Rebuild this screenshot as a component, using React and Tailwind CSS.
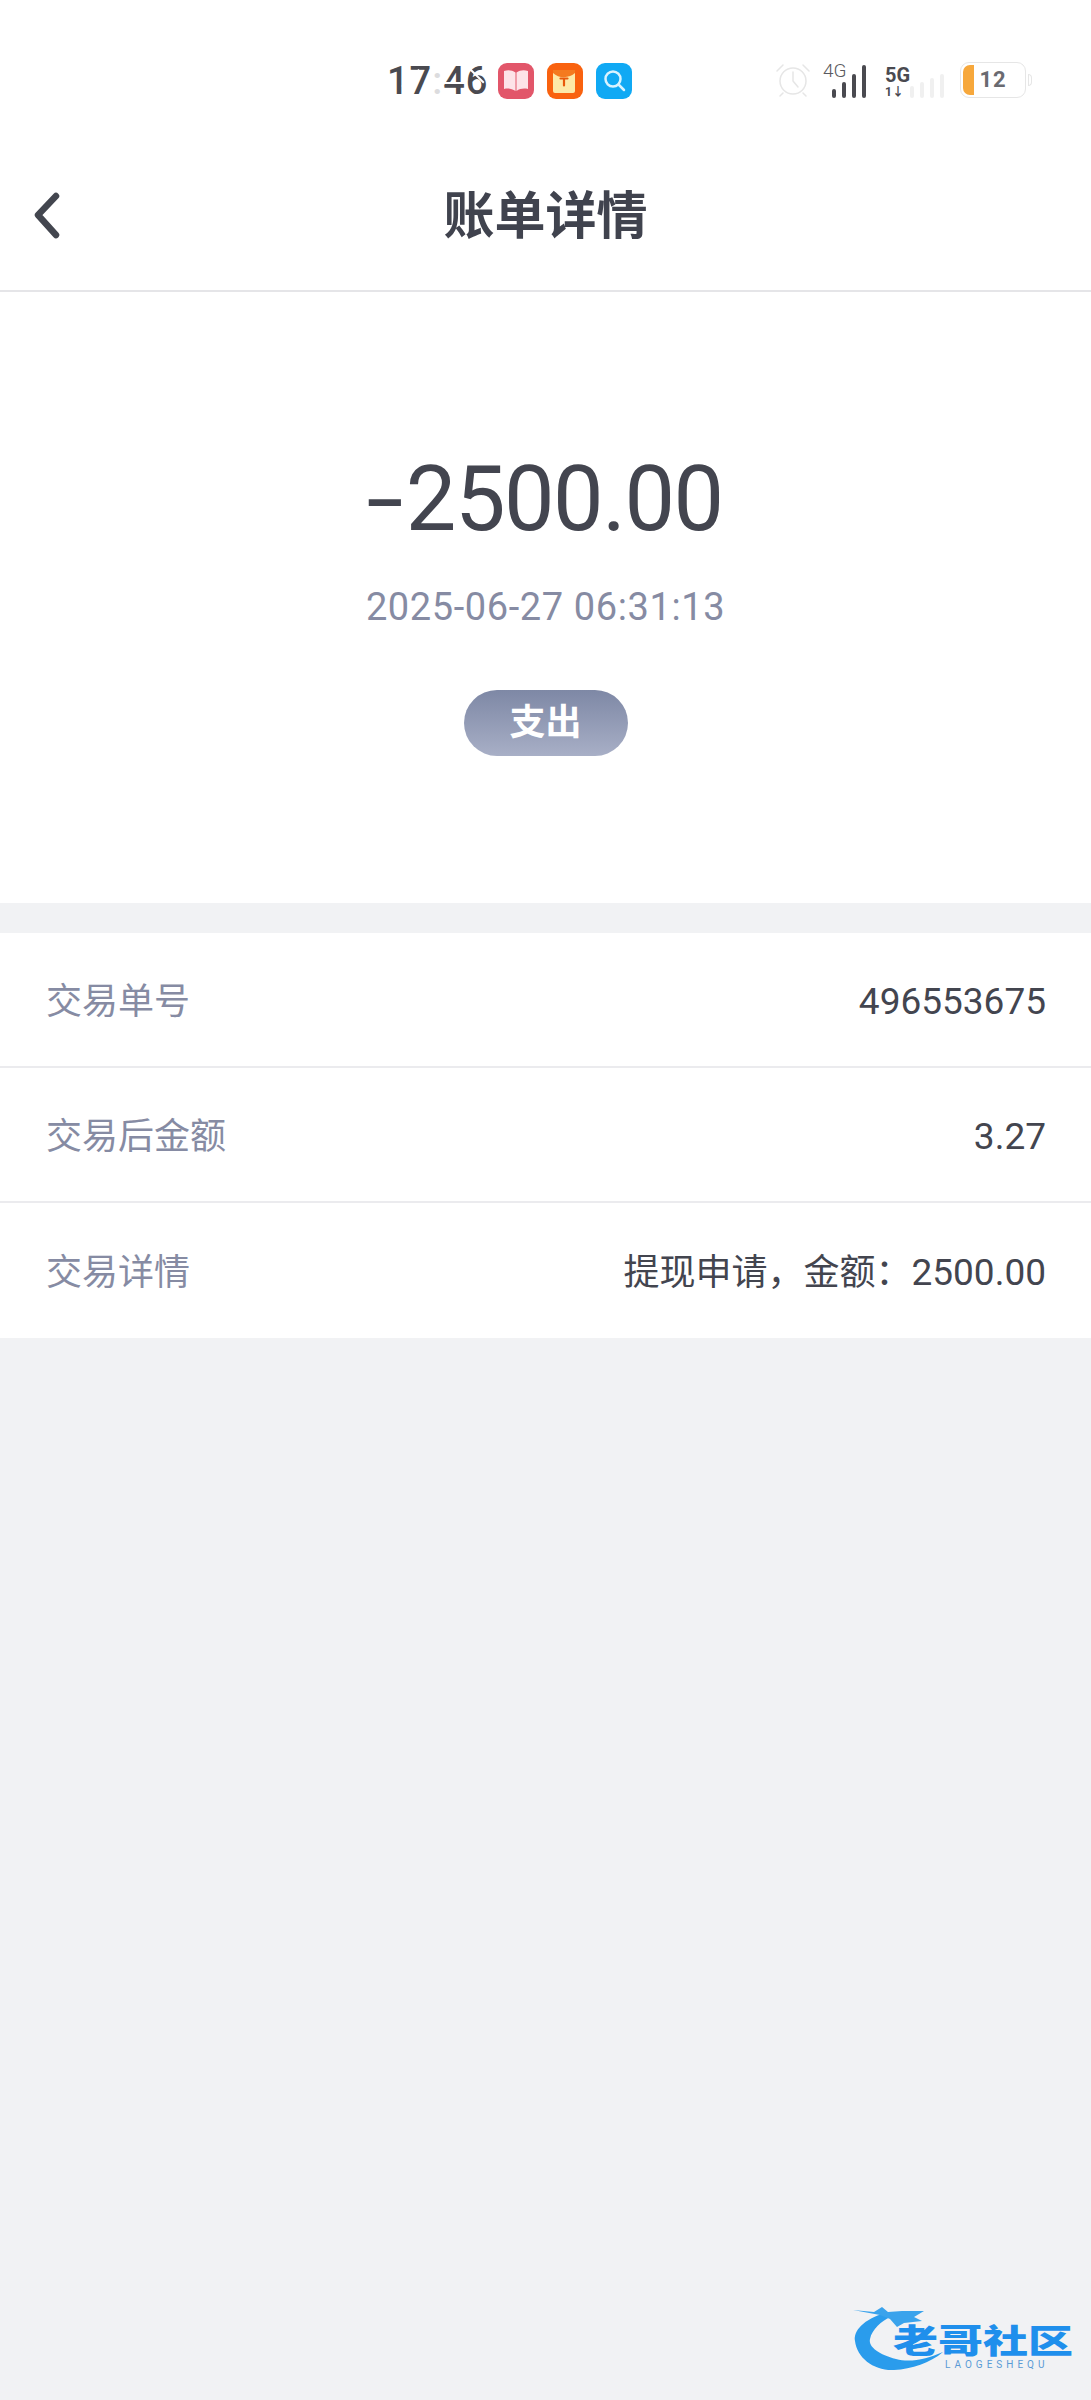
import React from 'react';

const latin = "font-['Roboto','Noto_Sans_CJK_SC',sans-serif]";

const BookIcon = () => (
  <svg width="36" height="36" viewBox="0 0 36 36">
    <rect width="36" height="36" rx="9" fill="#e2566a" />
    <path d="M6 8c4-1.500 8-1 11.500 1.500V28C14 25.500 10 25 6 26Z" fill="#fde3e8" />
    <path d="M30 8c-4-1.500-8-1-11.500 1.500V28c3.500-2.500 7.500-3 11.500-2Z" fill="#fde3e8" />
  </svg>
);

const PacketIcon = () => (
  <svg width="36" height="36" viewBox="0 0 36 36">
    <rect width="36" height="36" rx="9" fill="#f9620f" />
    <rect x="6" y="7" width="22" height="23" rx="2" fill="#fde9a8" />
    <path d="M6 7h22v3c-5 5-16 6-22 0Z" fill="#f47a1f" />
    <path d="M13.500 15.500h7M17 15.500v7" stroke="#e8590c" strokeWidth="2.200" strokeLinecap="round" />
  </svg>
);

const SearchIcon = () => (
  <svg width="36" height="36" viewBox="0 0 36 36">
    <rect width="36" height="36" rx="9" fill="#10a9f4" />
    <circle cx="17" cy="16" r="7.500" fill="none" stroke="#d9f3ff" strokeWidth="2.500" />
    <path d="M22.500 21.500 28 27" stroke="#d9f3ff" strokeWidth="2.500" strokeLinecap="round" />
  </svg>
);

const AlarmIcon = () => (
  <svg width="36" height="36" viewBox="0 0 36 36" fill="none" stroke="#e6e6e6" strokeWidth="1.500">
    <circle cx="18" cy="19" r="13" />
    <path d="M18 10v9l5 6M2 9l6-6M34 9l-6-6M8 31l-3 3M28 31l3 3" strokeLinecap="round" />
  </svg>
);

const Bars = ({ heights, color }) => (
  <div className="flex items-end gap-[6px]">
    {heights.map((h, i) => (
      <span key={i} className={`w-[4px] rounded-full ${color}`} style={{ height: h }} />
    ))}
  </div>
);

const StatusBar = () => (
  <div className="relative h-[132px] bg-white">
    <div className="absolute left-[387px] top-[62px] flex items-center">
      <div className="relative w-[111px] text-[38px] font-medium text-[#4a4a50] leading-none tracking-[1px]">
        17<span className="text-[#dcdcde]">:</span>46
        {/* the clock digits are broken up by thin gaps */}
        <span className="absolute left-[12px] top-[15px] w-[24px] h-[3px] -rotate-45 bg-white" />
        <span className="absolute left-[56px] top-[20px] w-[22px] h-[2px] bg-white" />
        <span className="absolute left-[78px] top-[12px] w-[22px] h-[2px] rotate-45 bg-white" />
      </div>
      <div className="flex gap-[13px]">
        <BookIcon />
        <PacketIcon />
        <SearchIcon />
      </div>
    </div>
    <div className="absolute left-[775px] top-[62px] flex items-center">
      <AlarmIcon />
      <div className="relative ml-[12px] w-[62px] h-[36px] flex items-end pl-[9px]">
        <span className="absolute left-0 top-0 text-[19px] leading-[18px] font-light text-[#5a5a60] bg-white">4G</span>
        <Bars heights={[9, 16, 24, 33]} color="bg-[#4a4a50]" />
      </div>
      <div className="flex items-end h-[36px] w-[75px]">
        <div className="flex flex-col w-[25px] text-[#4a4a50] font-bold">
          <span className="text-[20px] leading-[22px]">5G</span>
          <span className="text-[12px] leading-[12px]">1↓</span>
        </div>
        <Bars heights={[12, 16, 20, 24]} color="bg-[#f0f0f0]" />
      </div>
      <div className="flex items-center gap-[2px]">
        <div className="relative w-[66px] h-[36px] rounded-[9px] border border-[#e6e6e6] flex justify-center items-center">
          <span className="absolute left-[2px] top-[2px] bottom-[2px] w-[11px] rounded-l-[7px] bg-[#f7a83c]" />
          <span className="text-[22px] font-bold text-[#6a6a70] leading-none tracking-[1px]">12</span>
        </div>
        <span className="w-[4px] h-[12px] rounded-r border border-[#e6e6e6]" />
      </div>
    </div>
  </div>
);

const DetailRow = ({ label, value, amount, last }) => (
  <div className={`flex items-center justify-between h-[135px] pl-[46px] pr-[45px] pt-[4px] ${last ? '' : 'border-b-2 border-[#ebebee]'}`}>
    <span className="text-[36px] text-[#868ba3]">{label}</span>
    <span className="text-[37px] text-[#43454f]">
      {amount && <span className="text-[36px]">{amount}</span>}
      {value}
    </span>
  </div>
);

// site watermark pinned over the bottom corner of the page
const Watermark = () => (
  <div className="absolute left-[852px] top-[2303px] w-[226px] h-[76px]">
    <svg className="absolute left-0 top-0" width="96" height="72" viewBox="0 0 96 72">
      <path d="M33 10C12 16 1 28 3 38c2 17 19 30 39 29 18-1 36-7 49-18-16 7-33 11-47 7C28 52 16 44 18 36c2-10 12-18 20-22Z" fill="#2a9cec" />
      <path d="M1 7 22 9l8-5 6 5 14-1h22l-10 6 8 4-18 2-7 4-7-8-10-4Z" fill="#3aa3ec" />
    </svg>
    <div className="absolute left-[41px] top-[24px] h-[30px] text-[45px] leading-[30px] font-black whitespace-nowrap scale-y-[0.74] text-[#1f8fec]">
      老哥社区
    </div>
    <div className="absolute left-[93px] top-[57px] text-[10px] leading-[10px] text-[#5a9bd6] tracking-[4px] whitespace-nowrap">
      LAOGESHEQU
    </div>
  </div>
);

export default function App() {
  return (
    <div className={`relative min-h-[2400px] bg-[#f1f2f4] ${latin}`}>
      <StatusBar />

      <header className="relative flex items-center justify-center h-[160px] pt-[12px] bg-white border-b-2 border-[#e5e5e8]">
        <svg className="absolute left-[30px] top-[58px]" width="36" height="52" viewBox="0 0 36 52" fill="none">
          <path d="M26 6 8 25l18 20" stroke="#43464f" strokeWidth="6.500" strokeLinecap="round" strokeLinejoin="round" />
        </svg>
        <h1 className="text-[51px] font-bold text-[#40434e]">账单详情</h1>
      </header>

      <section className="flex flex-col items-center h-[611px] bg-white pt-[155px]">
        <div className="pl-[4px] text-[90px] leading-[105px] font-normal text-[#43454f] tracking-[-1.500px]">
          <span className="inline-block scale-x-150 mr-[10px]">-</span>2500.00
        </div>
        <div className="mt-[33px] text-[38px] leading-[44px] tracking-[0.600px] text-[#868ba3]">2025-06-27 06:31:13</div>
        <div className="mt-[61px] flex items-center justify-center w-[164px] h-[66px] rounded-full bg-gradient-to-b from-[#7e88a5] to-[#a8afc6] text-[36px] font-bold text-white">
          支出
        </div>
      </section>

      <section className="mt-[30px] bg-white">
        <DetailRow label="交易单号" value="496553675" />
        <DetailRow label="交易后金额" value="3.27" />
        <DetailRow label="交易详情" amount="提现申请，金额：" value="2500.00" last />
      </section>

      <Watermark />
    </div>
  );
}
